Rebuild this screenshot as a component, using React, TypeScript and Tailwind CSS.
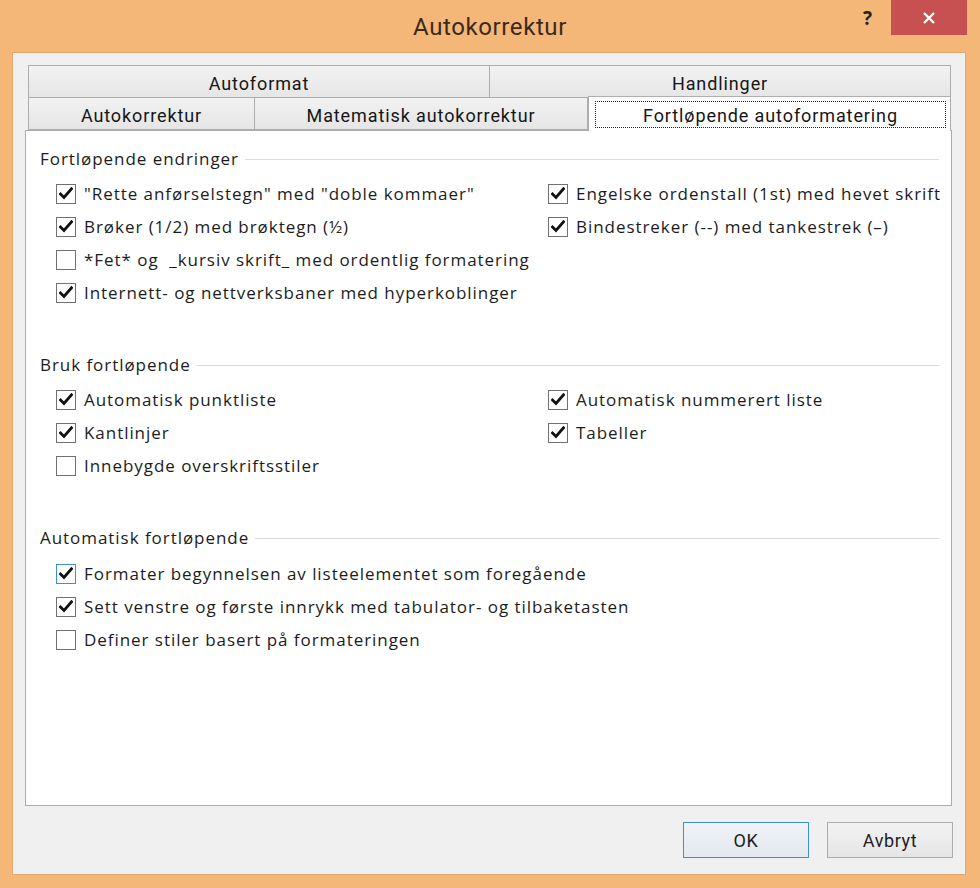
import React from "react";

const body = { fontFamily: '"Open Sans", "Noto Sans", sans-serif' };
const narrow = { fontFamily: 'Roboto, "Noto Sans", sans-serif' };

function Check({ on, focus }: { on: boolean; focus?: boolean }) {
  return (
    <span
      className={`flex h-[20px] w-[20px] shrink-0 items-center justify-center border bg-white ${
        focus ? "border-[#3c8fd4]" : "border-[#707070]"
      }`}
    >
      {on && (
        <svg width="14" height="13" viewBox="0 0 14 13">
          <path d="M1.5 7 L5 10.5 L12.5 1.8" fill="none" stroke="#111" strokeWidth="2.8" strokeLinecap="square" />
        </svg>
      )}
    </span>
  );
}

function Row({ label, on, focus }: { label: string; on: boolean; focus?: boolean }) {
  return (
    <div className="flex h-[33px] items-center gap-[8px]">
      <Check on={on} focus={focus} />
      <span className="whitespace-pre text-[17px] tracking-[0.95px] text-[#1c1c1c]">{label}</span>
    </div>
  );
}

function Heading({ text }: { text: string }) {
  return (
    <div className="flex h-[24px] items-center pr-[12px]">
      <span className="whitespace-nowrap text-[17px] tracking-[0.95px] text-[#1c1c1c]">{text}</span>
      <span className="ml-[6px] h-px flex-1 bg-[#dcdcdc]" />
    </div>
  );
}

function Tab({ label, w, className = "" }: { label: string; w: string; className?: string }) {
  return (
    <div
      className={`flex items-center justify-center border border-[#adadad] bg-gradient-to-b from-[#f2f2f2] to-[#e6e6e6] pt-[3px] text-[18px] tracking-[0.9px] text-[#161616] ${w} ${className}`}
      style={narrow}
    >
      {label}
    </div>
  );
}

export default function App() {
  return (
    <div className="flex h-[888px] w-[980px] flex-col bg-[#f5b778]" style={body}>
      {/* title bar */}
      <div className="relative flex h-[52px] items-center justify-center">
        <span className="pt-[2px] text-[24px] tracking-[0.6px] text-[#3b2a1c]" style={narrow}>
          Autokorrektur
        </span>
        <span className="absolute left-[863px] top-[4px] text-[19px] font-bold text-[#2a2015]">?</span>
        <div className="absolute left-[891px] top-0 flex h-[35px] w-[76px] items-center justify-center bg-[#c75050]">
          <svg width="14" height="14" viewBox="0 0 14 14">
            <path d="M2 2 L12 12 M12 2 L2 12" stroke="#fff" strokeWidth="2.4" />
          </svg>
        </div>
      </div>

      {/* client area */}
      <div className="ml-[12px] mr-[14px] flex flex-1 flex-col border border-[#e2a86e] bg-[#f0f0f0] pl-[12px] pr-[12px] pt-[12px]">
        {/* tabs */}
        <div className="flex flex-col pl-[3px] pr-[2px]">
          <div className="flex h-[33px]">
            <Tab label="Autoformat" w="w-[462px]" />
            <Tab label="Handlinger" w="flex-1" className="border-l-0" />
          </div>
          <div className="flex h-[32px]">
            <Tab label="Autokorrektur" w="w-[227px]" className="border-t-0" />
            <Tab label="Matematisk autokorrektur" w="w-[333px]" className="border-l-0 border-t-0" />
            <div
              className="relative z-10 -mt-[2px] flex h-[35px] flex-1 items-center border border-b-0 border-[#adadad] bg-white pl-[6px] pr-[4px]"
              style={narrow}
            >
              <div className="flex h-[27px] flex-1 items-center justify-center border border-dotted border-[#222] pt-[2px] text-[18px] tracking-[0.9px] text-[#161616]">
                Fortløpende autoformatering
              </div>
            </div>
          </div>
        </div>

        {/* panel */}
        <div className="mr-[1px] flex h-[676px] flex-col border border-[#adadad] bg-white pl-[14px] pt-[16px]">
          <Heading text="Fortløpende endringer" />
          <div className="mt-[6px] grid grid-cols-[492px_1fr] pl-[16px]">
            <div className="flex flex-col">
              <Row on label={'"Rette anførselstegn" med "doble kommaer"'} />
              <Row on label="Brøker (1/2) med brøktegn (½)" />
              <Row on={false} label="*Fet* og  _kursiv skrift_ med ordentlig formatering" />
              <Row on label="Internett- og nettverksbaner med hyperkoblinger" />
            </div>
            <div className="flex flex-col">
              <Row on label="Engelske ordenstall (1st) med hevet skrift" />
              <Row on label="Bindestreker (--) med tankestrek (–)" />
            </div>
          </div>

          <div className="mt-[44px]">
            <Heading text="Bruk fortløpende" />
          </div>
          <div className="mt-[6px] grid grid-cols-[492px_1fr] pl-[16px]">
            <div className="flex flex-col">
              <Row on label="Automatisk punktliste" />
              <Row on label="Kantlinjer" />
              <Row on={false} label="Innebygde overskriftsstiler" />
            </div>
            <div className="flex flex-col">
              <Row on label="Automatisk nummerert liste" />
              <Row on label="Tabeller" />
            </div>
          </div>

          <div className="mt-[44px]">
            <Heading text="Automatisk fortløpende" />
          </div>
          <div className="mt-[7px] flex flex-col pl-[16px]">
            <Row on focus label="Formater begynnelsen av listeelementet som foregående" />
            <Row on label="Sett venstre og første innrykk med tabulator- og tilbaketasten" />
            <Row on={false} label="Definer stiler basert på formateringen" />
          </div>
        </div>

        {/* buttons */}
        <div className="flex justify-end gap-[18px] pt-[16px]">
          <button
            className="flex h-[36px] w-[126px] items-center justify-center border border-[#3c8fd4] bg-gradient-to-b from-[#f0f4f8] to-[#e3e8ee] text-[18px] tracking-[0.6px] text-[#1e1e1e]"
            style={narrow}
          >
            OK
          </button>
          <button
            className="flex h-[36px] w-[126px] items-center justify-center border border-[#adadad] bg-gradient-to-b from-[#f2f2f2] to-[#e5e5e5] text-[18px] tracking-[0.6px] text-[#1e1e1e]"
            style={narrow}
          >
            Avbryt
          </button>
        </div>
      </div>
      <div className="h-[13px]" />
    </div>
  );
}
